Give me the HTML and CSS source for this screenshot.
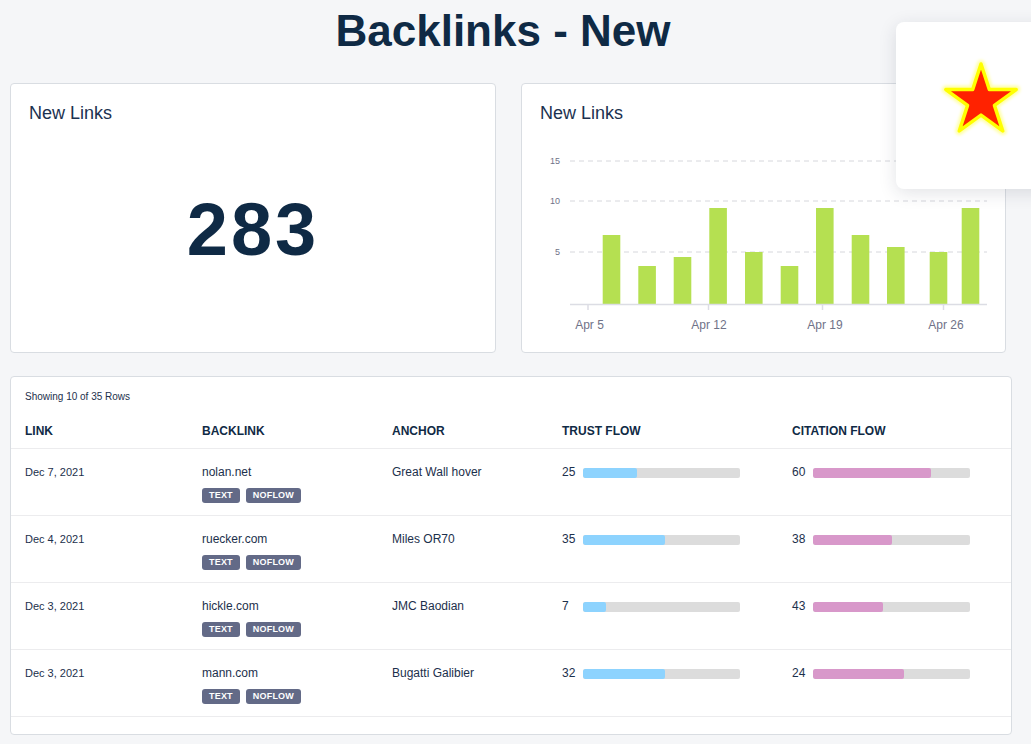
FILE: index.html
```html
<!DOCTYPE html>
<html lang="en">
<head>
<meta charset="utf-8">
<title>Backlinks - New</title>
<link rel="stylesheet" href="styles.css">
</head>
<body>
<div class="page">
  <h1 class="title">Backlinks - New</h1>

  <div class="stats">
    <section class="card stat-card">
      <h2 class="card-title">New Links</h2>
      <div class="big-number">283</div>
    </section>

    <section class="card chart-card">
      <h2 class="card-title">New Links</h2>
      <svg class="chart" width="483" height="212" viewBox="522 140 483 212" xmlns="http://www.w3.org/2000/svg">
        <g class="grid">
          <line x1="570" y1="161" x2="987" y2="161"/>
          <line x1="570" y1="201" x2="987" y2="201"/>
          <line x1="570" y1="252" x2="987" y2="252"/>
        </g>
        <g class="ylabels">
          <text x="560" y="164">15</text>
          <text x="560" y="204">10</text>
          <text x="560" y="255">5</text>
        </g>
        <g class="bars">
          <rect x="602.7" y="235" width="17.6" height="69"/>
          <rect x="638.3" y="266" width="17.6" height="38"/>
          <rect x="673.7" y="257" width="17.6" height="47"/>
          <rect x="709.3" y="208" width="17.6" height="96"/>
          <rect x="745" y="252" width="17.6" height="52"/>
          <rect x="780.7" y="266" width="17.6" height="38"/>
          <rect x="816" y="208" width="17.6" height="96"/>
          <rect x="851.7" y="235" width="17.6" height="69"/>
          <rect x="887" y="247" width="17.6" height="57"/>
          <rect x="929.7" y="252" width="17.6" height="52"/>
          <rect x="961.7" y="208" width="17.6" height="96"/>
        </g>
        <line class="axis" x1="570" y1="304.5" x2="987" y2="304.5"/>
        <g class="ticks">
          <line x1="588" y1="304" x2="588" y2="310"/>
          <line x1="708.5" y1="304" x2="708.5" y2="310"/>
          <line x1="822.5" y1="304" x2="822.5" y2="310"/>
          <line x1="943.5" y1="304" x2="943.5" y2="310"/>
        </g>
        <g class="xlabels">
          <text x="589.5" y="328.5">Apr 5</text>
          <text x="709" y="328.5">Apr 12</text>
          <text x="825" y="328.5">Apr 19</text>
          <text x="946" y="328.5">Apr 26</text>
        </g>
      </svg>
    </section>
  </div>

  <section class="card table-card">
    <div class="caption">Showing 10 of 35 Rows</div>
    <div class="row head">
      <div>LINK</div>
      <div>BACKLINK</div>
      <div>ANCHOR</div>
      <div>TRUST FLOW</div>
      <div>CITATION FLOW</div>
    </div>

    <div class="row">
      <div class="date">Dec 7, 2021</div>
      <div class="backlink">
        <div class="line">nolan.net</div>
        <div class="tags"><span class="tag">TEXT</span><span class="tag">NOFLOW</span></div>
      </div>
      <div class="line">Great Wall hover</div>
      <div class="metric"><span class="num">25</span><span class="track"><span class="fill trust" style="width:54px"></span></span></div>
      <div class="metric"><span class="num">60</span><span class="track"><span class="fill cite" style="width:118px"></span></span></div>
    </div>

    <div class="row">
      <div class="date">Dec 4, 2021</div>
      <div class="backlink">
        <div class="line">ruecker.com</div>
        <div class="tags"><span class="tag">TEXT</span><span class="tag">NOFLOW</span></div>
      </div>
      <div class="line">Miles OR70</div>
      <div class="metric"><span class="num">35</span><span class="track"><span class="fill trust" style="width:82px"></span></span></div>
      <div class="metric"><span class="num">38</span><span class="track"><span class="fill cite" style="width:79px"></span></span></div>
    </div>

    <div class="row">
      <div class="date">Dec 3, 2021</div>
      <div class="backlink">
        <div class="line">hickle.com</div>
        <div class="tags"><span class="tag">TEXT</span><span class="tag">NOFLOW</span></div>
      </div>
      <div class="line">JMC Baodian</div>
      <div class="metric"><span class="num">7</span><span class="track"><span class="fill trust" style="width:23px"></span></span></div>
      <div class="metric"><span class="num">43</span><span class="track"><span class="fill cite" style="width:70px"></span></span></div>
    </div>

    <div class="row">
      <div class="date">Dec 3, 2021</div>
      <div class="backlink">
        <div class="line">mann.com</div>
        <div class="tags"><span class="tag">TEXT</span><span class="tag">NOFLOW</span></div>
      </div>
      <div class="line">Bugatti Galibier</div>
      <div class="metric"><span class="num">32</span><span class="track"><span class="fill trust" style="width:82px"></span></span></div>
      <div class="metric"><span class="num">24</span><span class="track"><span class="fill cite" style="width:91px"></span></span></div>
    </div>
  </section>

  <div class="popup">
    <svg class="star" width="90" height="90" viewBox="936 56 90 90" xmlns="http://www.w3.org/2000/svg">
      <defs>
        <filter id="glow" x="-30%" y="-30%" width="160%" height="160%">
          <feGaussianBlur stdDeviation="1.4"/>
        </filter>
      </defs>
      <path class="star-glow" filter="url(#glow)" d="M981 64 L989.31 89.57 L1016.19 89.57 L994.44 105.37 L1002.75 130.93 L981 115.13 L959.25 130.93 L967.56 105.37 L945.81 89.57 L972.69 89.57 Z"/>
      <path class="star-main" d="M981 64 L989.31 89.57 L1016.19 89.57 L994.44 105.37 L1002.75 130.93 L981 115.13 L959.25 130.93 L967.56 105.37 L945.81 89.57 L972.69 89.57 Z"/>
    </svg>
  </div>
</div>
</body>
</html>
```

FILE: styles.css
```css
html, body {
  margin: 0;
  padding: 0;
}

body {
  background: #f5f6f8;
  font-family: "Liberation Sans", Arial, sans-serif;
  color: #1c304c;
  overflow: hidden;
  width: 1031px;
  height: 744px;
}

.page {
  position: relative;
  padding: 6px 0 0 10px;
}

.title {
  width: 986px;
  margin: 0 0 27px;
  height: 50px;
  font-size: 44px;
  line-height: 50px;
  font-weight: 700;
  text-align: center;
  color: #0f2a45;
}

.stats {
  display: grid;
  grid-template-columns: 486px 485px;
  column-gap: 25px;
  height: 270px;
}

.card {
  background: #fff;
  border: 1px solid #d9dde2;
  border-radius: 4px;
  box-sizing: border-box;
}

.card-title {
  margin: 0;
  padding: 18px 18px 0;
  font-size: 18px;
  line-height: 22px;
  font-weight: 400;
  color: #1b3150;
}

.stat-card {
  display: flex;
  flex-direction: column;
}

.big-number {
  flex: 1;
  display: flex;
  align-items: center;
  justify-content: center;
  padding-bottom: 16px;
  font-size: 74px;
  line-height: 74px;
  font-weight: 700;
  letter-spacing: 3px;
  color: #0f2a45;
}

.chart {
  display: block;
  margin-top: 16px;
}

.chart .grid line {
  stroke: #d6d7dc;
  stroke-width: 1;
  stroke-dasharray: 5 4;
}

.chart .axis {
  stroke: #dcdde4;
  stroke-width: 1.5;
}

.chart .ticks line {
  stroke: #dcdde4;
  stroke-width: 1.5;
}

.chart .bars rect {
  fill: #b5e051;
}

.chart .ylabels text {
  font-family: "Liberation Sans", Arial, sans-serif;
  font-size: 9px;
  fill: #6f7288;
  text-anchor: end;
}

.chart .xlabels text {
  font-family: "Liberation Sans", Arial, sans-serif;
  font-size: 12px;
  fill: #6f7288;
  text-anchor: middle;
}

.table-card {
  margin-top: 23px;
  width: 1002px;
  height: 359px;
  padding-top: 14px;
}

.caption {
  padding-left: 14px;
  font-size: 10px;
  line-height: 12px;
  color: #1c304c;
}

.row {
  display: grid;
  grid-template-columns: 177px 190px 170px 230px 1fr;
  padding: 16px 0 12px 14px;
  border-bottom: 1px solid #ececee;
  font-size: 12px;
  line-height: 15px;
  align-items: start;
}

.row.head {
  padding: 21px 0 10px 14px;
  line-height: 14px;
  font-weight: 700;
  color: #102a45;
}

.date {
  font-size: 11px;
  line-height: 15px;
}

.line {
  line-height: 15px;
}

.tags {
  display: flex;
  gap: 6px;
  margin-top: 8px;
}

.tag {
  display: inline-block;
  height: 15px;
  padding: 0 7px;
  box-sizing: border-box;
  border-radius: 3px;
  background: #636a87;
  color: #fff;
  font-size: 9px;
  font-weight: 700;
  line-height: 15px;
  letter-spacing: 0.2px;
}

.metric {
  display: flex;
  align-items: center;
  height: 15px;
}

.num {
  width: 21px;
  flex: none;
}

.track {
  display: block;
  width: 157px;
  height: 10px;
  border-radius: 2px;
  background: #dcdcdc;
  overflow: hidden;
}

.fill {
  display: block;
  height: 100%;
  border-radius: 2px;
}

.fill.trust {
  background: #8dd3fe;
}

.fill.cite {
  background: #d898ca;
}

.popup {
  position: absolute;
  left: 896px;
  top: 22px;
  width: 170px;
  height: 167px;
  box-sizing: border-box;
  padding: 34px 0 0 40px;
  background: #fff;
  border-radius: 8px;
  box-shadow: 0 4px 18px rgba(30, 40, 60, 0.13);
}

.star {
  display: block;
}

.star-glow {
  fill: none;
  stroke: #ffff80;
  stroke-width: 8;
  stroke-linejoin: round;
  opacity: 0.7;
}

.star-main {
  fill: #ff2200;
  stroke: #ffff00;
  stroke-width: 3.5;
  stroke-linejoin: round;
}
```
